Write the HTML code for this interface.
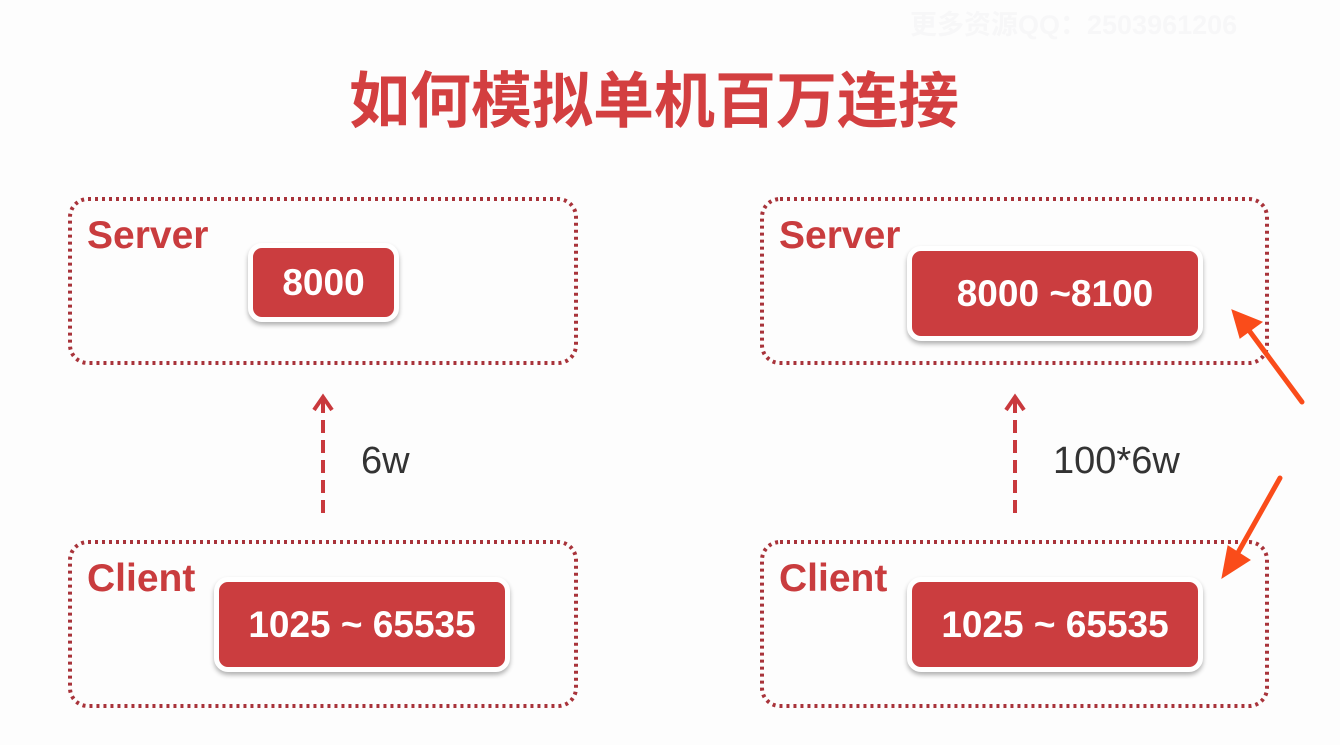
<!DOCTYPE html>
<html><head><meta charset="utf-8"><style>
body{margin:0;width:1340px;height:745px;background:#fdfdfd;position:relative;overflow:hidden;font-family:"Liberation Sans","Noto Sans CJK SC",sans-serif}
.a{position:absolute}
.lbl{color:#c93c3e;font-weight:bold;font-size:39px;line-height:1}
.btn{position:absolute;background:#cb3d3f;border:5px solid #fff;border-radius:14px;box-shadow:0 3px 5px rgba(0,0,0,.3);color:#fff;font-weight:bold;font-size:37px;display:flex;align-items:center;justify-content:center;box-sizing:border-box}
.t{color:#333;font-size:38px;line-height:1}
</style></head><body>
<div class="a" style="left:910px;top:3px;font-size:27px;font-weight:bold;color:#f7f7f8">更多资源QQ：2503961206</div>
<div class="a" style="left:0;width:1308px;top:61px;text-align:center;font-size:61px;font-weight:bold;color:#d33f40;line-height:70px;font-family:'Noto Sans CJK SC',sans-serif">如何模拟单机百万连接</div>
<svg class="a" style="left:0;top:0" width="1340" height="745">
<g fill="none" stroke="#a8333a" stroke-width="4" stroke-dasharray="3 4">
<rect x="70" y="199" width="506" height="164" rx="18"/>
<rect x="762" y="199" width="505" height="164" rx="18"/>
<rect x="70" y="542" width="506" height="164" rx="18"/>
<rect x="762" y="542" width="505" height="164" rx="18"/>
</g>
<g stroke="#c9393d" stroke-width="4" fill="none">
<line x1="323" y1="400" x2="323" y2="515" stroke-dasharray="13 7"/>
<polyline points="314,410 323,397 332,410"/>
<line x1="1015" y1="400" x2="1015" y2="515" stroke-dasharray="13 7"/>
<polyline points="1006,410 1015,397 1024,410"/>
</g>
<g stroke="#fa4c1a" stroke-width="5" stroke-linecap="round" fill="#fa4c1a">
<line x1="1302" y1="402" x2="1245" y2="325"/>
<polygon points="1232,310 1262,322 1240,338" stroke-width="1"/>
<line x1="1280" y1="478" x2="1235" y2="558"/>
<polygon points="1222,578 1228,546 1250,560" stroke-width="1"/>
</g>
</svg>
<div class="a lbl" style="left:87px;top:216px">Server</div>
<div class="a lbl" style="left:779px;top:216px">Server</div>
<div class="a lbl" style="left:87px;top:559px">Client</div>
<div class="a lbl" style="left:779px;top:559px">Client</div>
<div class="btn" style="left:248px;top:243px;width:151px;height:79px">8000</div>
<div class="btn" style="left:907px;top:246px;width:296px;height:95px">8000 ~8100</div>
<div class="btn" style="left:214px;top:577px;width:296px;height:95px">1025 ~ 65535</div>
<div class="btn" style="left:907px;top:577px;width:296px;height:95px">1025 ~ 65535</div>
<div class="a t" style="left:361px;top:442px">6w</div>
<div class="a t" style="left:1053px;top:442px">100*6w</div>
</body></html>
